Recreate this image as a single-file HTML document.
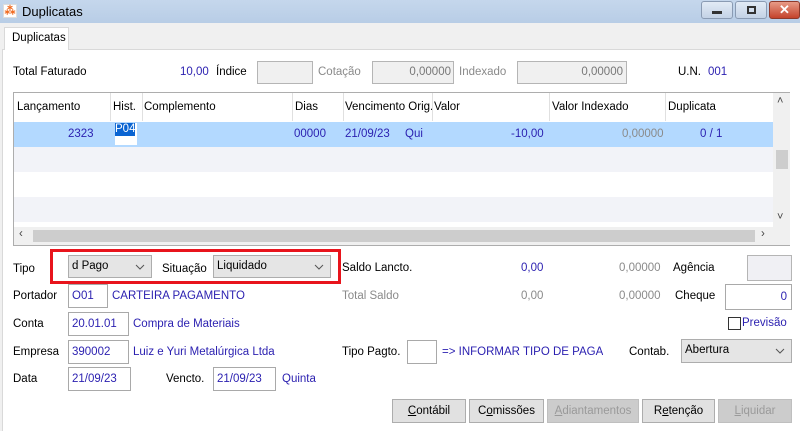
<!DOCTYPE html>
<html><head><meta charset="utf-8"><style>
*{box-sizing:border-box;margin:0;padding:0}
body{width:800px;height:431px;overflow:hidden;background:#f0f0f0;font-family:"Liberation Sans",sans-serif;font-size:11.5px;color:#000;position:relative}
.a{position:absolute;white-space:nowrap}
.b{color:#2a1fb0}
.g{color:#8a8a8a}
.box{position:absolute;background:#fff;border:1px solid #a9a9a9}
.dis{position:absolute;background:#f0f0f0;border:1px solid #b5b5b5}
.cb{position:absolute;background:#e5e5e5;border:1px solid #adadad}
.chev{position:absolute;right:6px;top:8px;width:10px;height:6px}
.btn{position:absolute;top:399px;height:24px;background:#e1e1e1;border:1px solid #adadad;text-align:center;line-height:22px}
.hd{overflow:hidden}
</style></head><body>
<div class="a" style="left:0;top:0;width:800px;height:23px;background:linear-gradient(#c5d7ec,#b8cde6)"></div>
<div class="a" style="left:3px;top:4px;width:14px;height:14px;background:#fff;border:1px solid #ddd;color:#f06a20;font-size:11px;line-height:12px;text-align:center;font-weight:bold">⁂</div>
<div class="a" style="left:22px;top:4px;font-size:13px">Duplicatas</div>
<div class="a" style="left:701px;top:1px;width:32px;height:18px;border:1px solid #8a9bb3;border-radius:3px;background:linear-gradient(#e2ebf6,#c3d2e6)"><div class="a" style="left:10px;top:9px;width:10px;height:3px;background:#333"></div></div>
<div class="a" style="left:735px;top:1px;width:32px;height:18px;border:1px solid #8a9bb3;border-radius:3px;background:linear-gradient(#e2ebf6,#c3d2e6)"><div class="a" style="left:11px;top:4px;width:9px;height:8px;border:2px solid #333"></div></div>
<div class="a" style="left:769px;top:1px;width:31px;height:18px;border:1px solid #8e3a2c;border-radius:3px;background:linear-gradient(#e79b87,#c4432c);color:#fff;font-weight:bold;text-align:center;line-height:16px;font-size:13px">✕</div>
<div class="a" style="left:4px;top:27px;width:65px;height:23px;background:#fff;border:1px solid #d9d9d9;border-bottom:none;z-index:2;padding:4px 0 0 7px">Duplicatas</div>
<div class="a" style="left:2px;top:49px;width:798px;height:382px;background:#fff;border-top:1px solid #d9d9d9;border-left:1px solid #d9d9d9"></div>

<div class="a" style="left:13px;top:66px">Total Faturado</div>
<div class="a b" style="left:180px;top:66px">10,00</div>
<div class="a" style="left:216px;top:66px">Índice</div>
<div class="dis" style="left:257px;top:61px;width:56px;height:23px"></div>
<div class="a g" style="left:318px;top:66px">Cotação</div>
<div class="dis" style="left:372px;top:61px;width:82px;height:23px;text-align:right;padding:4px 2px;color:#777">0,00000</div>
<div class="a g" style="left:459px;top:66px">Indexado</div>
<div class="dis" style="left:517px;top:61px;width:110px;height:23px;text-align:right;padding:4px 3px;color:#777">0,00000</div>
<div class="a" style="left:678px;top:66px">U.N.</div>
<div class="a b" style="left:708px;top:66px">001</div>

<div class="a" style="left:13px;top:92px;width:777px;height:154px;border:1px solid #adadad;background:#fff">
 <div class="a" style="left:96px;top:0;width:1px;height:28px;background:#e0e0e0"></div>
 <div class="a" style="left:128px;top:0;width:1px;height:28px;background:#e0e0e0"></div>
 <div class="a" style="left:278px;top:0;width:1px;height:28px;background:#e0e0e0"></div>
 <div class="a" style="left:329px;top:0;width:1px;height:28px;background:#e0e0e0"></div>
 <div class="a" style="left:418px;top:0;width:1px;height:28px;background:#e0e0e0"></div>
 <div class="a" style="left:535px;top:0;width:1px;height:28px;background:#e0e0e0"></div>
 <div class="a" style="left:651px;top:0;width:1px;height:28px;background:#e0e0e0"></div>
 <div class="a" style="left:3px;top:8px">Lançamento</div>
 <div class="a" style="left:99px;top:8px">Hist.</div>
 <div class="a" style="left:130px;top:8px">Complemento</div>
 <div class="a" style="left:281px;top:8px">Dias</div>
 <div class="a hd" style="left:331px;top:8px;width:87px">Vencimento Orig.</div>
 <div class="a" style="left:420px;top:8px">Valor</div>
 <div class="a" style="left:538px;top:8px">Valor Indexado</div>
 <div class="a" style="left:654px;top:8px">Duplicata</div>
 <div class="a" style="left:0;top:29px;width:759px;height:25px;background:#b3d9ff"></div>
 <div class="a" style="left:0;top:54px;width:759px;height:25px;background:#f2f3f8"></div>
 <div class="a" style="left:0;top:104px;width:759px;height:25px;background:#f2f3f8"></div>
 <div class="a b" style="left:54px;top:35px">2323</div>
 <div class="a" style="left:101px;top:30px;width:22px;height:22px;background:#fff"></div>
 <div class="a" style="left:101px;top:30px;background:#0a64d2;color:#fff;line-height:13px">P04</div>
 <div class="a b" style="left:280px;top:35px">00000</div>
 <div class="a b" style="left:331px;top:35px">21/09/23</div>
 <div class="a b" style="left:391px;top:35px">Qui</div>
 <div class="a b" style="left:497px;top:35px">-10,00</div>
 <div class="a g" style="left:608px;top:35px">0,00000</div>
 <div class="a b" style="left:686px;top:35px">0 / 1</div>
 <div class="a" style="left:759px;top:0;width:17px;height:134px;background:#f0f0f0"></div>
 <div class="a" style="left:763px;top:2px;font-size:11px;color:#444">˄</div>
 <div class="a" style="left:762px;top:57px;width:12px;height:19px;background:#cdcdcd"></div>
 <div class="a" style="left:763px;top:118px;font-size:11px;color:#444">˅</div>
 <div class="a" style="left:0;top:134px;width:776px;height:18px;background:#f0f0f0"></div>
 <div class="a" style="left:19px;top:137px;width:722px;height:12px;background:#cdcdcd"></div>
 <div class="a" style="left:5px;top:135px;color:#444">‹</div>
 <div class="a" style="left:747px;top:135px;color:#444">›</div>
</div>

<div class="a" style="left:13px;top:263px">Tipo</div>
<div class="cb" style="left:68px;top:255px;width:84px;height:23px;padding:4px 3px">d Pago<svg class="chev" viewBox="0 0 10 6"><path d="M1 1L5 5L9 1" fill="none" stroke="#555"/></svg></div>
<div class="a" style="left:162px;top:263px">Situação</div>
<div class="cb" style="left:213px;top:255px;width:118px;height:23px;padding:4px 3px">Liquidado<svg class="chev" viewBox="0 0 10 6"><path d="M1 1L5 5L9 1" fill="none" stroke="#555"/></svg></div>
<div class="a" style="left:50px;top:249px;width:291px;height:35px;border:3px solid #e8141c"></div>

<div class="a" style="left:342px;top:262px">Saldo Lancto.</div>
<div class="a b" style="left:521px;top:262px">0,00</div>
<div class="a g" style="left:619px;top:262px">0,00000</div>
<div class="a" style="left:673px;top:262px">Agência</div>
<div class="dis" style="left:747px;top:255px;width:45px;height:26px;background:#f0f0f4"></div>

<div class="a" style="left:13px;top:290px">Portador</div>
<div class="box" style="left:68px;top:284px;width:40px;height:24px;padding:5px 3px" ><span class="b">O01</span></div>
<div class="a b" style="left:112px;top:290px">CARTEIRA PAGAMENTO</div>
<div class="a g" style="left:342px;top:290px">Total Saldo</div>
<div class="a g" style="left:521px;top:290px">0,00</div>
<div class="a g" style="left:619px;top:290px">0,00000</div>
<div class="a" style="left:675px;top:290px">Cheque</div>
<div class="box" style="left:725px;top:284px;width:67px;height:26px;text-align:right;padding:6px 4px"><span class="b">0</span></div>

<div class="a" style="left:13px;top:318px">Conta</div>
<div class="box" style="left:68px;top:312px;width:61px;height:24px;padding:5px 3px"><span class="b">20.01.01</span></div>
<div class="a b" style="left:133px;top:318px">Compra de Materiais</div>
<div class="a" style="left:728px;top:317px;width:13px;height:13px;border:1px solid #333;background:#fff"></div>
<div class="a b" style="left:742px;top:317px">Previsão</div>

<div class="a" style="left:13px;top:346px">Empresa</div>
<div class="box" style="left:68px;top:340px;width:61px;height:24px;padding:5px 3px"><span class="b">390002</span></div>
<div class="a b" style="left:133px;top:346px">Luiz e Yuri Metalúrgica Ltda</div>
<div class="a" style="left:342px;top:346px">Tipo Pagto.</div>
<div class="box" style="left:407px;top:340px;width:30px;height:24px"></div>
<div class="a b" style="left:442px;top:346px;width:161px;overflow:hidden">=&gt; INFORMAR TIPO DE PAGAMENTO</div>
<div class="a" style="left:629px;top:346px">Contab.</div>
<div class="cb" style="left:681px;top:339px;width:111px;height:24px;padding:4px 3px">Abertura<svg class="chev" viewBox="0 0 10 6"><path d="M1 1L5 5L9 1" fill="none" stroke="#555"/></svg></div>

<div class="a" style="left:13px;top:373px">Data</div>
<div class="box" style="left:68px;top:367px;width:63px;height:24px;padding:5px 3px"><span class="b">21/09/23</span></div>
<div class="a" style="left:166px;top:373px">Vencto.</div>
<div class="box" style="left:213px;top:367px;width:63px;height:24px;padding:5px 3px"><span class="b">21/09/23</span></div>
<div class="a b" style="left:282px;top:373px">Quinta</div>

<div class="btn" style="left:392px;width:74px"><u>C</u>ontábil</div>
<div class="btn" style="left:469px;width:75px">C<u>o</u>missões</div>
<div class="btn" style="left:547px;width:92px;background:#ccc;border-color:#bfbfbf;color:#9a9a9a"><u>A</u>diantamentos</div>
<div class="btn" style="left:642px;width:73px">R<u>e</u>tenção</div>
<div class="btn" style="left:718px;width:74px;background:#ccc;border-color:#bfbfbf;color:#9a9a9a"><u>L</u>iquidar</div>
</body></html>
